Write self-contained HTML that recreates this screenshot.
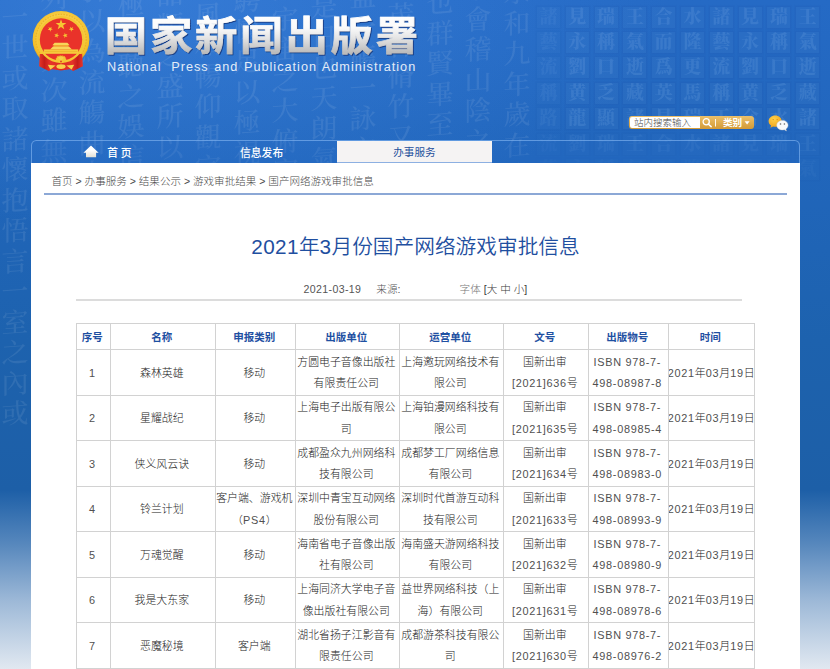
<!DOCTYPE html>
<html lang="zh-CN">
<head>
<meta charset="utf-8">
<title>2021年3月份国产网络游戏审批信息</title>
<style>
html,body{margin:0;padding:0;}
body{width:830px;height:669px;overflow:hidden;position:relative;background:#1d60b6;font-family:"Liberation Sans","Noto Sans CJK SC",sans-serif;}
#bg{position:absolute;left:0;top:0;width:830px;height:669px;background:
 radial-gradient(ellipse 520px 230px at 150px 0px,rgba(80,150,240,.38),rgba(80,150,240,0) 100%),
 linear-gradient(180deg,rgba(255,255,255,0) 0,rgba(255,255,255,0) 490px,rgba(236,240,245,.28) 544px,rgba(236,240,245,.62) 601px,rgba(236,240,245,.96) 672px),
 linear-gradient(180deg,#256ac5 0,#2166bc 160px,#1d62ae 340px,#1d5fa7 490px,#1d5fa7 100%);}
#cal{position:absolute;left:0;top:0;width:545px;height:560px;overflow:hidden;font-family:"Liberation Serif","Noto Serif CJK SC",serif;font-weight:500;font-size:27px;color:rgba(255,255,255,.085);filter:blur(.4px);}
#cal div{position:absolute;width:32px;line-height:30.5px;word-break:break-all;text-align:center;transform:skewY(-4deg);}
#seal{position:absolute;left:0;top:0;width:830px;height:200px;overflow:hidden;font-family:"Liberation Serif","Noto Serif CJK SC",serif;filter:blur(.4px);}
#seal b{position:absolute;width:23px;height:21px;line-height:21px;text-align:center;font-size:18px;font-weight:900;color:rgba(170,205,250,.13);background:rgba(255,255,255,.028);box-shadow:0 0 0 1.5px rgba(10,40,110,.05);}
#logo{position:absolute;left:28px;top:6px;}
#sitename{position:absolute;left:100px;top:0px;}
#siteen{position:absolute;left:107px;top:59px;font-size:12.7px;line-height:16px;color:#e3ecf8;white-space:nowrap;letter-spacing:1px;word-spacing:1px;}
#search{position:absolute;left:628.5px;top:115.5px;width:125px;height:13px;border-radius:3px;background:linear-gradient(180deg,#ecc06a,#d39a36);overflow:hidden;}
#search .inp{position:absolute;left:1px;top:1px;width:70.5px;height:11px;background:#fff;border-radius:2px 0 0 2px;font-size:9.5px;line-height:11.5px;color:#4a4a4a;font-weight:300;padding-left:4.5px;box-sizing:border-box;white-space:nowrap;}
#search .cat{position:absolute;left:94.5px;top:0;font-size:9.6px;line-height:13px;color:#fff;font-weight:700;white-space:nowrap;}
#search svg{position:absolute;left:72px;top:0;}
#wx{position:absolute;left:767px;top:114px;}
#nav{position:absolute;left:31px;top:140px;width:769.3px;height:23px;border:1px solid rgba(130,180,240,.65);border-bottom:0;border-radius:5.5px 5.5px 0 0;box-sizing:border-box;background:rgba(40,110,200,.22);}
#nav .it{position:absolute;top:1.2px;height:22px;line-height:22px;font-size:10.8px;font-weight:500;color:#fff;white-space:nowrap;}
#nav svg{position:absolute;left:51px;top:4px;}
#nav .act{position:absolute;left:305.3px;top:0;width:154.3px;height:21px;background:#f5f3f3;color:#25509c;text-align:center;line-height:22.5px;font-size:10.6px;border-bottom:1px solid #8db0e2;}
#panel{position:absolute;left:31px;top:163px;width:769.3px;height:510px;background:#fff;}
#crumb{position:absolute;left:51.5px;top:173.4px;font-size:10.55px;line-height:16px;color:#4a4a4a;font-weight:300;white-space:nowrap;}
#crumbline{position:absolute;left:44px;top:193.1px;width:743px;height:1.6px;background:#8ca8d6;}
#title{position:absolute;left:29.5px;width:772px;top:230px;text-align:center;font-size:20.7px;font-weight:350;line-height:34px;color:#1f4fa0;white-space:nowrap;}
#title .dg{letter-spacing:.4px;}
.meta{font-weight:300;position:absolute;top:281.3px;font-size:10.6px;line-height:16px;color:#555;white-space:nowrap;}
#metaline{position:absolute;left:76px;top:299.2px;width:666px;height:1.5px;background:#dcdcdc;}
table{position:absolute;left:76px;top:323px;border-collapse:collapse;table-layout:fixed;width:678px;font-size:10.9px;color:#333;}
td,th{border:1px solid #d2d2d2;padding:0;text-align:center;vertical-align:middle;line-height:22.25px;overflow:hidden;white-space:nowrap;}
th{height:25px;color:#1f50a2;font-weight:700;font-size:10.5px;}
td{height:44.5px;line-height:21.7px;font-weight:300;color:#222;}
td span{display:inline-block;vertical-align:middle;transform:translate(-1.2px,.75px);}
th span{display:inline-block;transform:translate(-1.3px,.5px);}
td i{font-style:normal;letter-spacing:.7px;color:#505050;}
</style>
</head>
<body>
<div id="bg"></div>
<div id="cal"><div style="left:501.0px;top:-22px">永和九年歲在癸丑暮春之初會于會稽</div><div style="left:462.4px;top:-26px">于會稽山陰之蘭亭脩稧事也群賢畢</div><div style="left:423.8px;top:-12px">也群賢畢至少長咸集此地有崇山峻</div><div style="left:385.2px;top:-30px">領茂林脩竹又有清流激湍暎帶左右</div><div style="left:346.6px;top:-18px">盛一觴一詠亦足以暢敘幽情是日也</div><div style="left:308.0px;top:-8px">是日也天朗氣清惠風和暢仰觀宇宙</div><div style="left:269.4px;top:-26px">觀宇宙之大俯察品類之盛所以遊目</div><div style="left:230.8px;top:-14px">騁懷足以極視聽之娛信可樂也夫人</div><div style="left:192.2px;top:-30px">惠風和暢仰觀宇宙之大俯察品類之</div><div style="left:153.6px;top:-20px">品類之盛所以遊目騁懷足以極視聽</div><div style="left:115.0px;top:-10px">極視聽之娛信可樂也夫人之相與俯</div><div style="left:76.4px;top:-24px">引以為流觴曲水列坐其次雖無絲竹</div><div style="left:37.8px;top:-16px">列坐其次雖無絲竹管弦之盛一觴一</div><div style="left:-0.8px;top:-28px">仰一世或取諸懷抱悟言一室之內或</div></div>
<div id="seal"><b style="left:537.0px;top:6.5px;opacity:0.60">諸</b><b style="left:565.8px;top:6.5px;opacity:1.00">見</b><b style="left:594.6px;top:6.5px;opacity:1.00">瑞</b><b style="left:623.4px;top:6.5px;opacity:1.00">王</b><b style="left:652.2px;top:6.5px;opacity:1.00">合</b><b style="left:681.0px;top:6.5px;opacity:1.00">水</b><b style="left:709.8px;top:6.5px;opacity:1.00">諸</b><b style="left:738.6px;top:6.5px;opacity:1.00">見</b><b style="left:767.4px;top:6.5px;opacity:1.00">瑞</b><b style="left:796.2px;top:6.5px;opacity:1.00">王</b><b style="left:537.0px;top:31.9px;opacity:0.60">藝</b><b style="left:565.8px;top:31.9px;opacity:1.00">永</b><b style="left:594.6px;top:31.9px;opacity:1.00">稱</b><b style="left:623.4px;top:31.9px;opacity:1.00">氣</b><b style="left:652.2px;top:31.9px;opacity:1.00">而</b><b style="left:681.0px;top:31.9px;opacity:1.00">隆</b><b style="left:709.8px;top:31.9px;opacity:1.00">藝</b><b style="left:738.6px;top:31.9px;opacity:1.00">永</b><b style="left:767.4px;top:31.9px;opacity:1.00">稱</b><b style="left:796.2px;top:31.9px;opacity:1.00">氣</b><b style="left:537.0px;top:57.3px;opacity:0.60">流</b><b style="left:565.8px;top:57.3px;opacity:1.00">劉</b><b style="left:594.6px;top:57.3px;opacity:1.00">口</b><b style="left:623.4px;top:57.3px;opacity:1.00">逝</b><b style="left:652.2px;top:57.3px;opacity:1.00">爲</b><b style="left:681.0px;top:57.3px;opacity:1.00">更</b><b style="left:709.8px;top:57.3px;opacity:1.00">流</b><b style="left:738.6px;top:57.3px;opacity:1.00">劉</b><b style="left:767.4px;top:57.3px;opacity:1.00">口</b><b style="left:796.2px;top:57.3px;opacity:1.00">逝</b><b style="left:537.0px;top:82.7px;opacity:0.60">稱</b><b style="left:565.8px;top:82.7px;opacity:1.00">黄</b><b style="left:594.6px;top:82.7px;opacity:1.00">乏</b><b style="left:623.4px;top:82.7px;opacity:1.00">藏</b><b style="left:652.2px;top:82.7px;opacity:1.00">英</b><b style="left:681.0px;top:82.7px;opacity:1.00">馬</b><b style="left:709.8px;top:82.7px;opacity:1.00">稱</b><b style="left:738.6px;top:82.7px;opacity:1.00">黄</b><b style="left:767.4px;top:82.7px;opacity:1.00">乏</b><b style="left:796.2px;top:82.7px;opacity:1.00">藏</b><b style="left:537.0px;top:108.1px;opacity:0.60">路</b><b style="left:565.8px;top:108.1px;opacity:1.00">龍</b><b style="left:594.6px;top:108.1px;opacity:1.00">顯</b><b style="left:623.4px;top:108.1px;opacity:1.00">諸</b><b style="left:652.2px;top:108.1px;opacity:1.00">見</b><b style="left:681.0px;top:108.1px;opacity:1.00">瑞</b><b style="left:709.8px;top:108.1px;opacity:1.00">王</b><b style="left:738.6px;top:108.1px;opacity:1.00">合</b><b style="left:767.4px;top:108.1px;opacity:1.00">水</b><b style="left:796.2px;top:108.1px;opacity:1.00">諸</b><b style="left:537.0px;top:133.5px;opacity:0.33">流</b><b style="left:565.8px;top:133.5px;opacity:0.55">劉</b><b style="left:594.6px;top:133.5px;opacity:0.55">瑞</b><b style="left:623.4px;top:133.5px;opacity:0.55">王</b><b style="left:652.2px;top:133.5px;opacity:0.55">合</b><b style="left:681.0px;top:133.5px;opacity:0.55">水</b><b style="left:709.8px;top:133.5px;opacity:0.55">諸</b><b style="left:738.6px;top:133.5px;opacity:0.55">見</b><b style="left:767.4px;top:133.5px;opacity:0.55">瑞</b><b style="left:796.2px;top:133.5px;opacity:0.55">王</b><b style="left:537.0px;top:158.9px;opacity:0.18">藝</b><b style="left:565.8px;top:158.9px;opacity:0.30">永</b><b style="left:594.6px;top:158.9px;opacity:0.30">稱</b><b style="left:623.4px;top:158.9px;opacity:0.30">氣</b><b style="left:652.2px;top:158.9px;opacity:0.30">而</b><b style="left:681.0px;top:158.9px;opacity:0.30">隆</b><b style="left:709.8px;top:158.9px;opacity:0.30">藝</b><b style="left:738.6px;top:158.9px;opacity:0.30">永</b><b style="left:767.4px;top:158.9px;opacity:0.30">稱</b><b style="left:796.2px;top:158.9px;opacity:0.30">氣</b></div>

<svg id="logo" width="66" height="70" viewBox="0 0 66 70">
 <defs><radialGradient id="gold" cx=".5" cy=".45" r=".55"><stop offset=".7" stop-color="#f7cf45"/><stop offset=".9" stop-color="#f4bd28"/><stop offset="1" stop-color="#dc9a1c"/></radialGradient><linearGradient id="rib" x1="0" y1="0" x2="1" y2="0"><stop offset="0" stop-color="#e8362a"/><stop offset=".12" stop-color="#c41d1a"/><stop offset=".25" stop-color="#e6332a"/><stop offset=".5" stop-color="#dc2a22"/><stop offset=".75" stop-color="#e6332a"/><stop offset=".88" stop-color="#c41d1a"/><stop offset="1" stop-color="#e8362a"/></linearGradient></defs>
 <circle cx="33.0" cy="33.5" r="28.4" fill="url(#gold)"/>
 <circle cx="33.0" cy="33.5" r="25.2" fill="none" stroke="#e9ae24" stroke-width="1.2" stroke-dasharray="1.6 1.2" opacity=".8"/>
 <path d="M11.8 48.0 L54.2 48.0 L54.9 60.2 L45.2 64.9 L42.0 63.2 L33.0 64.6 L24.0 63.2 L20.8 64.9 L11.1 60.2 Z" fill="url(#rib)"/>
 <circle cx="33.0" cy="33.5" r="23.5" fill="#f5c535"/>
 <circle cx="33.0" cy="33.5" r="21.2" fill="#e9322a"/>
 <polygon points="33.00,13.20 34.32,16.99 38.33,17.07 35.13,19.49 36.29,23.33 33.00,21.04 29.71,23.33 30.87,19.49 27.67,17.07 31.68,16.99" fill="#f6c733"/>
 <polygon points="23.55,20.66 23.19,22.56 24.84,23.56 22.92,23.80 22.48,25.69 21.66,23.94 19.73,24.10 21.14,22.78 20.39,20.99 22.09,21.93" fill="#f6c733"/>
 <polygon points="42.05,20.66 43.51,21.93 45.21,20.99 44.46,22.78 45.87,24.10 43.94,23.94 43.12,25.69 42.68,23.80 40.76,23.56 42.41,22.56" fill="#f6c733"/>
 <polygon points="29.30,26.79 29.44,28.72 31.30,29.26 29.51,29.99 29.57,31.92 28.32,30.44 26.50,31.10 27.52,29.46 26.34,27.93 28.21,28.39" fill="#f6c733"/>
 <polygon points="36.60,26.79 37.69,28.39 39.56,27.93 38.38,29.46 39.40,31.10 37.58,30.44 36.33,31.92 36.39,29.99 34.60,29.26 36.46,28.72" fill="#f6c733"/>
 <path d="M26.6 36.8 L39.4 36.8 L41.6 39.2 L24.4 39.2 Z" fill="#f8d65a"/>
 <rect x="25.6" y="39.2" width="14.8" height="1.4" fill="#f2bd2e"/>
 <path d="M25.0 40.6 L41.0 40.6 L44.0 43.4 L22.0 43.4 Z" fill="#f8d65a"/>
 <rect x="15.8" y="43.4" width="34.4" height="4.4" fill="#f6ca3c"/>
 <rect x="16.5" y="45.0" width="33.0" height="0.7" fill="#efb42c"/>
 <ellipse cx="33.0" cy="53.0" rx="4.6" ry="3" fill="#f6cf4a" stroke="#f0b92b" stroke-width="1.4" stroke-dasharray="1 .7"/>
 <path d="M27.0 54.5 L30.0 51.5 L33.0 55.2 L36.0 51.5 L39.0 54.5 L33.0 57.4 Z" fill="#f5c535"/>
 <circle cx="33.0" cy="55.6" r="1" fill="#e04a28"/>
 <ellipse cx="33.0" cy="60.6" rx="4.6" ry="2.4" fill="#f7d04a"/>
 <path d="M19.8 58.8 L27.6 59.6 L22.4 63.6 Z" fill="#f7d04a"/>
 <path d="M46.2 58.8 L38.4 59.6 L43.6 63.6 Z" fill="#f7d04a"/>
</svg>

<svg id="sitename" width="340" height="70" viewBox="0 0 340 70">
 <defs>
  <linearGradient id="tg" gradientUnits="userSpaceOnUse" x1="0" y1="-38" x2="0" y2="3">
   <stop offset="0" stop-color="#ffffff"/><stop offset=".35" stop-color="#fafafa"/><stop offset=".6" stop-color="#e6e6e6"/><stop offset="1" stop-color="#bcbcbc"/>
  </linearGradient>
  <filter id="ts" x="-5%" y="-10%" width="110%" height="130%"><feDropShadow dx="1" dy="1" stdDeviation=".7" flood-color="#0b2e6e" flood-opacity=".75"/></filter>
 </defs>
 <g filter="url(#ts)"><text transform="translate(4.8,49.6) scale(1,.93)" font-family="'Liberation Sans','Noto Sans CJK SC',sans-serif" font-size="42.4" font-weight="700" letter-spacing="2.75" fill="url(#tg)" stroke="url(#tg)" stroke-width=".7">国家新闻出版署</text></g>
</svg>
<div id="siteen"><span style="margin-right:4.2px">National</span> Press and Publication Administration</div>

<div id="search"><div class="inp">站内搜索输入</div>
 <svg width="53" height="13" viewBox="0 0 53 13"><circle cx="5.2" cy="5.8" r="3.1" fill="none" stroke="#fff" stroke-width="1.3"/><path d="M7.4 8.2 L10.2 10.6" stroke="#fff" stroke-width="1.5" stroke-linecap="round"/><rect x="14" y="3" width="1" height="7.5" fill="#fff" opacity=".9"/><path d="M43.6 5.2 h5 l-2.5 3.2z" fill="#fff"/></svg>
 <div class="cat">类别</div></div>
<svg id="wx" width="24" height="19" viewBox="0 0 24 19">
 <defs><radialGradient id="wy" cx=".4" cy=".3" r=".7"><stop offset="0" stop-color="#ffd24a"/><stop offset="1" stop-color="#f0a21c"/></radialGradient></defs>
 <path d="M8.2 1.6 c-3.8 0-6.6 2.5-6.6 5.6 c0 1.8 1 3.3 2.5 4.3 l-.7 2.3 l2.7-1.4 c.7.2 1.4.3 2.1.3 c3.8 0 6.6-2.5 6.6-5.5 c0-3.100-2.800-5.600-6.600-5.600z" fill="url(#wy)"/>
 <path d="M15.400 6.400 c-3.200 0-5.700 2.100-5.700 4.800 c0 2.700 2.500 4.800 5.700 4.800 c.6 0 1.200-.1 1.800-.3 l2.300 1.300 l-.6-2 c1.400-.9 2.200-2.300 2.200-3.800 c0-2.700-2.500-4.800-5.700-4.800z" fill="#fafafa" stroke="#c8c8c8" stroke-width=".4"/>
 <circle cx="13.500" cy="10" r=".8" fill="#666"/><circle cx="17.400" cy="10" r=".8" fill="#666"/>
 <circle cx="6.200" cy="5.600" r=".7" fill="#e08a10"/><circle cx="10.200" cy="5.600" r=".7" fill="#e08a10"/>
</svg>

<div id="nav">
 <svg width="17" height="14" viewBox="0 0 17 14"><defs><linearGradient id="hg" x1="0" y1="0" x2="0" y2="1"><stop offset=".4" stop-color="#fff"/><stop offset="1" stop-color="#e4e0d4"/></linearGradient></defs><path d="M8 .5 L15.600 7.800 L13.100 7.800 L13.100 12.200 L3 12.200 L3 7.800 L.4 7.800 Z" fill="url(#hg)"/></svg>
 <div class="it" style="left:75.3px;letter-spacing:2.6px;">首页</div>
 <div class="it" style="left:208px;">信息发布</div>
 <div class="act">办事服务</div>
</div>

<div id="panel"></div>
<div id="crumb">首页 &gt; 办事服务 &gt; 结果公示 &gt; 游戏审批结果 &gt; 国产网络游戏审批信息</div>
<div id="crumbline"></div>
<div id="title"><span class="dg">2021</span>年<span class="dg">3</span>月份国产网络游戏审批信息</div>
<div class="meta" style="left:303.5px;letter-spacing:.36px;">2021-03-19</div>
<div class="meta" style="left:376.3px;">来源:</div>
<div class="meta" style="left:459.6px;"><span style="color:#777">字体</span> <span style="color:#3a3a3a">[大 中 小]</span></div>
<div id="metaline"></div>

<table>
<colgroup><col style="width:34px"><col style="width:105px"><col style="width:80px"><col style="width:104px"><col style="width:104px"><col style="width:85px"><col style="width:80px"><col style="width:86px"></colgroup>
<tr><th><span>序号</span></th><th><span>名称</span></th><th><span>申报类别</span></th><th><span>出版单位</span></th><th><span>运营单位</span></th><th><span>文号</span></th><th><span>出版物号</span></th><th><span>时间</span></th></tr>
<tr><td><span><i>1</i></span></td><td><span>森林英雄</span></td><td><span>移动</span></td><td><span>方圆电子音像出版社<br>有限责任公司</span></td><td><span>上海邀玩网络技术有<br>限公司</span></td><td><span>国新出审<br><i>[2021]636</i>号</span></td><td><span><i>ISBN 978-7-</i><br><i>498-08987-8</i></span></td><td><span><i>2021</i>年<i>03</i>月<i>19</i>日</span></td></tr>
<tr><td><span><i>2</i></span></td><td><span>星耀战纪</span></td><td><span>移动</span></td><td><span>上海电子出版有限公<br>司</span></td><td><span>上海铂漫网络科技有<br>限公司</span></td><td><span>国新出审<br><i>[2021]635</i>号</span></td><td><span><i>ISBN 978-7-</i><br><i>498-08985-4</i></span></td><td><span><i>2021</i>年<i>03</i>月<i>19</i>日</span></td></tr>
<tr><td><span><i>3</i></span></td><td><span>侠义风云诀</span></td><td><span>移动</span></td><td><span>成都盈众九州网络科<br>技有限公司</span></td><td><span>成都梦工厂网络信息<br>有限公司</span></td><td><span>国新出审<br><i>[2021]634</i>号</span></td><td><span><i>ISBN 978-7-</i><br><i>498-08983-0</i></span></td><td><span><i>2021</i>年<i>03</i>月<i>19</i>日</span></td></tr>
<tr><td><span><i>4</i></span></td><td><span>铃兰计划</span></td><td><span>客户端、游戏机<br>（<i>PS4</i>）</span></td><td><span>深圳中青宝互动网络<br>股份有限公司</span></td><td><span>深圳时代首游互动科<br>技有限公司</span></td><td><span>国新出审<br><i>[2021]633</i>号</span></td><td><span><i>ISBN 978-7-</i><br><i>498-08993-9</i></span></td><td><span><i>2021</i>年<i>03</i>月<i>19</i>日</span></td></tr>
<tr><td><span><i>5</i></span></td><td><span>万魂觉醒</span></td><td><span>移动</span></td><td><span>海南省电子音像出版<br>社有限公司</span></td><td><span>海南盛天游网络科技<br>有限公司</span></td><td><span>国新出审<br><i>[2021]632</i>号</span></td><td><span><i>ISBN 978-7-</i><br><i>498-08980-9</i></span></td><td><span><i>2021</i>年<i>03</i>月<i>19</i>日</span></td></tr>
<tr><td><span><i>6</i></span></td><td><span>我是大东家</span></td><td><span>移动</span></td><td><span>上海同济大学电子音<br>像出版社有限公司</span></td><td><span>益世界网络科技（上<br>海）有限公司</span></td><td><span>国新出审<br><i>[2021]631</i>号</span></td><td><span><i>ISBN 978-7-</i><br><i>498-08978-6</i></span></td><td><span><i>2021</i>年<i>03</i>月<i>19</i>日</span></td></tr>
<tr><td><span><i>7</i></span></td><td><span>恶魔秘境</span></td><td><span>客户端</span></td><td><span>湖北省扬子江影音有<br>限责任公司</span></td><td><span>成都游茶科技有限公<br>司</span></td><td><span>国新出审<br><i>[2021]630</i>号</span></td><td><span><i>ISBN 978-7-</i><br><i>498-08976-2</i></span></td><td><span><i>2021</i>年<i>03</i>月<i>19</i>日</span></td></tr>
</table>
</body>
</html>
